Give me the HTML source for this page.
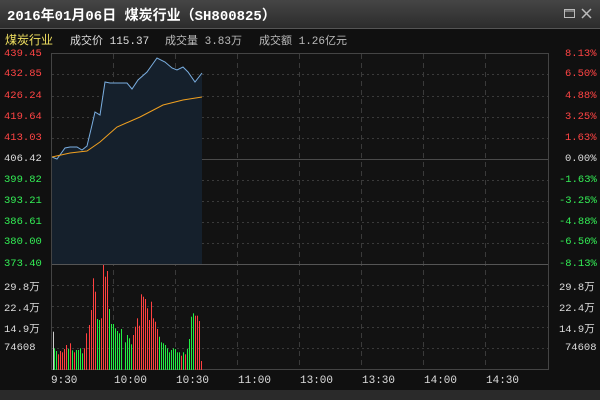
<!DOCTYPE html>
<html><head><meta charset="utf-8"><style>
*{margin:0;padding:0}
body{width:600px;height:400px;background:#101010;overflow:hidden;position:relative;font-family:"Liberation Mono","Noto Sans CJK SC",monospace;}
#tb{position:absolute;left:0;top:0;width:600px;height:28px;background:linear-gradient(#454545,#2c2c2c);border-bottom:1px solid #555;}
#tt{position:absolute;left:7px;top:5px;color:#fff;font:bold 14px "Liberation Mono","Noto Sans CJK SC",monospace;letter-spacing:0px}
#bb{position:absolute;left:0;top:390px;width:600px;height:10px;background:#2a2a2a}
.t{position:absolute;font-size:10.5px;white-space:nowrap}
svg{position:absolute;left:0;top:0}
</style></head><body>
<div id="tb"><div id="tt">2016年01月06日 煤炭行业（SH800825）</div>
<svg width="600" height="28"><rect x="564.5" y="9.5" width="10" height="8" fill="none" stroke="#bbb"/><line x1="565" y1="11" x2="574" y2="11" stroke="#bbb"/><path d="M582 9 L591 18 M591 9 L582 18" stroke="#bbb" stroke-width="1.5"/></svg></div>
<div class="t" style="left:5px;top:31px;color:#f0e060;font-size:12px;font-family:'Noto Sans CJK SC',sans-serif">煤炭行业</div>
<div class="t" style="left:70px;top:32px;color:#ddd;font-size:11px">成交价 115.37</div>
<div class="t" style="left:165px;top:32px;color:#bbb;font-size:11px">成交量 3.83万</div>
<div class="t" style="left:259px;top:32px;color:#bbb;font-size:11px">成交额 1.26亿元</div>
<svg width="600" height="400" id="s">
<rect x="51.5" y="53.5" width="497" height="316" fill="#121212" stroke="#444"/>
<g stroke="#3a3a3a" stroke-dasharray="2,3">
<line x1="52" y1="74.5" x2="548" y2="74.5"/><line x1="52" y1="96.5" x2="548" y2="96.5"/><line x1="52" y1="117.5" x2="548" y2="117.5"/><line x1="52" y1="138.5" x2="548" y2="138.5"/>
<line x1="52" y1="180.5" x2="548" y2="180.5"/><line x1="52" y1="201.5" x2="548" y2="201.5"/><line x1="52" y1="222.5" x2="548" y2="222.5"/><line x1="52" y1="243.5" x2="548" y2="243.5"/>
<line x1="52" y1="285.5" x2="548" y2="285.5"/><line x1="52" y1="306.5" x2="548" y2="306.5"/><line x1="52" y1="327.5" x2="548" y2="327.5"/><line x1="52" y1="348.5" x2="548" y2="348.5"/>
</g>
<g stroke="#3a3a3a" stroke-dasharray="5,4">
<line x1="113.5" y1="54" x2="113.5" y2="369"/><line x1="175.5" y1="54" x2="175.5" y2="369"/><line x1="237.5" y1="54" x2="237.5" y2="369"/><line x1="299.5" y1="54" x2="299.5" y2="369"/><line x1="361.5" y1="54" x2="361.5" y2="369"/><line x1="423.5" y1="54" x2="423.5" y2="369"/><line x1="485.5" y1="54" x2="485.5" y2="369"/>
</g>
<line x1="52" y1="159.5" x2="548" y2="159.5" stroke="#4a4a4a"/>
<line x1="52" y1="264.5" x2="548" y2="264.5" stroke="#555"/>
<path d="M52 157 L57 159 L65 148 L70 147 L77 147 L82 150 L87 146 L92 125 L95 112 L100 115 L105 82 L110 83 L120 83 L127 83 L132 89 L138 80 L147 72 L152 65 L157 58 L165 62 L172 68 L177 70 L183 67 L188 72 L195 82 L202 73 L202 264 L52 264Z" fill="#15202c"/>
<path d="M52 157 L57 159 L65 148 L70 147 L77 147 L82 150 L87 146 L92 125 L95 112 L100 115 L105 82 L110 83 L120 83 L127 83 L132 89 L138 80 L147 72 L152 65 L157 58 L165 62 L172 68 L177 70 L183 67 L188 72 L195 82 L202 73" fill="none" stroke="#7aaee0"/>
<path d="M52 157 L70 153 L87 151 L100 142 L117 127 L140 117 L163 105 L183 100 L202 97" fill="none" stroke="#f0a020"/>
<g id="bars"></g>
</svg>
<div class="t" style="left:4px;top:48px;color:#ff4444">439.45</div>
<div class="t" style="left:4px;top:68px;color:#ff4444">432.85</div>
<div class="t" style="left:4px;top:90px;color:#ff4444">426.24</div>
<div class="t" style="left:4px;top:111px;color:#ff4444">419.64</div>
<div class="t" style="left:4px;top:132px;color:#ff4444">413.03</div>
<div class="t" style="left:4px;top:153px;color:#ddd">406.42</div>
<div class="t" style="left:4px;top:174px;color:#33ee55">399.82</div>
<div class="t" style="left:4px;top:195px;color:#33ee55">393.21</div>
<div class="t" style="left:4px;top:216px;color:#33ee55">386.61</div>
<div class="t" style="left:4px;top:236px;color:#33ee55">380.00</div>
<div class="t" style="left:4px;top:258px;color:#33ee55">373.40</div>
<div class="t" style="left:4px;top:279px;color:#ddd">29.8万</div>
<div class="t" style="left:4px;top:300px;color:#ddd">22.4万</div>
<div class="t" style="left:4px;top:321px;color:#ddd">14.9万</div>
<div class="t" style="left:4px;top:342px;color:#ddd">74608</div>
<div class="t" style="left:565px;top:48px;color:#ff4444">8.13%</div>
<div class="t" style="left:565px;top:68px;color:#ff4444">6.50%</div>
<div class="t" style="left:565px;top:90px;color:#ff4444">4.88%</div>
<div class="t" style="left:565px;top:111px;color:#ff4444">3.25%</div>
<div class="t" style="left:565px;top:132px;color:#ff4444">1.63%</div>
<div class="t" style="left:565px;top:153px;color:#ddd">0.00%</div>
<div class="t" style="left:559px;top:174px;color:#33ee55">-1.63%</div>
<div class="t" style="left:559px;top:195px;color:#33ee55">-3.25%</div>
<div class="t" style="left:559px;top:216px;color:#33ee55">-4.88%</div>
<div class="t" style="left:559px;top:236px;color:#33ee55">-6.50%</div>
<div class="t" style="left:559px;top:258px;color:#33ee55">-8.13%</div>
<div class="t" style="left:559px;top:279px;color:#ddd">29.8万</div>
<div class="t" style="left:559px;top:300px;color:#ddd">22.4万</div>
<div class="t" style="left:559px;top:321px;color:#ddd">14.9万</div>
<div class="t" style="left:565px;top:342px;color:#ddd">74608</div>
<div class="t" style="left:51px;top:375px;color:#ddd;font-size:11px">9:30</div>
<div class="t" style="left:114px;top:375px;color:#ddd;font-size:11px">10:00</div>
<div class="t" style="left:176px;top:375px;color:#ddd;font-size:11px">10:30</div>
<div class="t" style="left:238px;top:375px;color:#ddd;font-size:11px">11:00</div>
<div class="t" style="left:300px;top:375px;color:#ddd;font-size:11px">13:00</div>
<div class="t" style="left:362px;top:375px;color:#ddd;font-size:11px">13:30</div>
<div class="t" style="left:424px;top:375px;color:#ddd;font-size:11px">14:00</div>
<div class="t" style="left:486px;top:375px;color:#ddd;font-size:11px">14:30</div>
<div id="bb"></div>
<script>
var d="38:230w,43:280g,49:288g,55:298r,61:288r,67:292r,73:282r,79:270r,85:282g,91:265r,97:286g,103:292r,109:285g,115:285g,121:280g,127:295g,133:280r,139:235r,148:210r,154:165r,160:70r,166:110r,172:192g,178:195g,184:190r,190:30r,196:65r,202:48r,208:162g,214:207g,220:207g,226:220g,232:228g,238:235g,244:222g,254:262g,260:240g,266:250g,272:268g,278:240r,284:215r,290:190r,296:212r,302:118r,308:125r,314:132r,320:160r,326:195r,332:140r,338:190r,344:200r,350:222r,356:245g,362:262g,368:265g,374:270g,380:280g,386:292g,392:285g,398:280g,404:282g,410:292g,416:292g,422:302r,428:292g,434:298r,440:282g,446:252g,452:185g,458:175g,464:182r,470:182r,476:198r,482:318r".split(",");
var h="",c={r:"#ff4040",g:"#22ee44",w:"#ccc"};
d.forEach(function(s){var p=s.split(":"),x=40+(+p[0].trim())/3,y=255+parseInt(p[1])/3,k=p[1].trim().slice(-1);
h+='<rect x="'+Math.round(x)+'" y="'+y.toFixed(1)+'" width="1" height="'+(370-y).toFixed(1)+'" fill="'+c[k]+'"/>';});
document.getElementById("bars").innerHTML=h;
</script>
</body></html>
